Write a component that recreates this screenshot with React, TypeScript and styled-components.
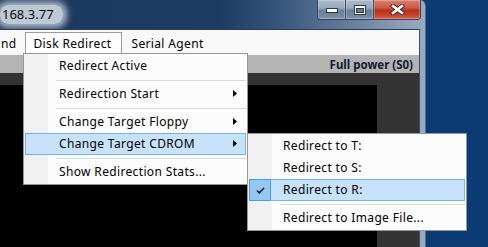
import React from 'react';
import styled, { createGlobalStyle } from 'styled-components';

const GlobalStyle = createGlobalStyle`
  html, body { margin: 0; padding: 0; background: #0c3a73; }
  body { font-family: "Noto Sans", "Open Sans", sans-serif; }
  #root { width: 488px; height: 247px; }
`;

const Desktop = styled.div`
  position: relative;
  width: 488px;
  height: 247px;
  overflow: hidden;
  background: #0c3a73;
  display: flex;
  align-items: stretch;
`;

const Window = styled.div`
  width: 426px;
  box-sizing: border-box;
  display: flex;
  flex-direction: column;
  padding-right: 5px;
  border-right: 1px solid #5b7190;
  border-top-right-radius: 6px;
  background: linear-gradient(
    to right,
    #1b395e 0%,
    #1e3c61 52%,
    #34517a 64%,
    #5f7897 80%,
    #8a9db6 94%,
    #99abc2 100%
  );
`;

const TitleBar = styled.div`
  height: 29px;
  display: flex;
  justify-content: space-between;
  align-items: flex-start;
`;

const Title = styled.span`
  margin-top: 5px;
  height: 19px;
  line-height: 19px;
  padding: 0 9px 0 2px;
  font-size: 13px;
  color: #0a0a0a;
  background: rgba(205, 213, 223, 0.92);
  border-radius: 8px;
  box-shadow: 0 0 6px 4px rgba(205, 213, 223, 0.8);
`;

const CaptionGroup = styled.div`
  display: flex;
  height: 20px;
  border: 1px solid #34455b;
  border-top: none;
  border-radius: 0 0 4px 4px;
  overflow: hidden;
  box-sizing: border-box;
  margin-right: -1px;
`;

const CaptionButton = styled.div<{ $w: number; $close?: boolean }>`
  width: ${(p) => p.$w}px;
  display: flex;
  align-items: center;
  justify-content: center;
  box-sizing: border-box;
  border-left: 1px solid #3a4b62;
  box-shadow: inset 0 0 0 1px rgba(255, 255, 255, 0.25);
  &:first-child { border-left: none; }
  background: ${(p) =>
    p.$close
      ? 'linear-gradient(to bottom, #d9806f 0%, #cc5a44 40%, #b8321b 55%, #c8432a 80%, #d8654a 100%)'
      : 'linear-gradient(to bottom, #aebbcb 0%, #97a8bd 42%, #6a7f9c 55%, #72879f 85%, #8596ad 100%)'};
`;

const Client = styled.div`
  flex: 1;
  display: flex;
  flex-direction: column;
  border-top: 1px solid #2b3e57;
  border-right: 1px solid #3e4f66;
  background: #333333;
`;

const MenuBar = styled.div`
  height: 25px;
  box-sizing: border-box;
  padding-top: 2px;
  display: flex;
  align-items: stretch;
  background: #f8f8f8;
  font-size: 12px;
  letter-spacing: 0.35px;
  color: #000;
`;

const MenuTab = styled.div<{ $active?: boolean; $pl: number; $pr: number }>`
  display: flex;
  align-items: center;
  padding: 0 ${(p) => p.$pr}px 1px ${(p) => p.$pl}px;
  border: 1px solid ${(p) => (p.$active ? '#9d9d9d' : 'transparent')};
  border-bottom: none;
  background: ${(p) => (p.$active ? '#fdfdfd' : 'transparent')};
  white-space: nowrap;
`;

const StatusBar = styled.div`
  height: 18px;
  display: flex;
  align-items: center;
  justify-content: flex-end;
  padding-right: 6px;
  background: #b4b4b4;
  font-size: 11.5px;
  font-weight: 700;
  color: #0f1c36;
`;

const Screen = styled.div`
  flex: 1;
  display: flex;
  padding-top: 12px;
  background: #333333;
`;

const Display = styled.div`
  width: 377px;
  background: #000;
`;

const Menu = styled.div<{ $x: number; $y: number; $w: number }>`
  position: absolute;
  left: ${(p) => p.$x}px;
  top: ${(p) => p.$y}px;
  width: ${(p) => p.$w}px;
  box-sizing: border-box;
  border: 1px solid #979797;
  padding: 1px;
  background: linear-gradient(to right, #f1f1f1 0, #f1f1f1 25px, #fcfcfc 25px);
  background-origin: border-box;
  font-size: 12px;
  letter-spacing: 0.35px;
  color: #000;
`;

const MenuItem = styled.div<{ $hot?: boolean }>`
  position: relative;
  height: 22px;
  box-sizing: border-box;
  display: flex;
  align-items: center;
  justify-content: space-between;
  padding: 0 8px 1px 33px;
  border: 1px solid ${(p) => (p.$hot ? '#7ab3ea' : 'transparent')};
  background: ${(p) => (p.$hot ? '#c7e2fb' : 'transparent')};
  white-space: nowrap;
`;

const CheckBox = styled.div`
  position: absolute;
  left: -1px;
  top: -1px;
  width: 22px;
  height: 22px;
  box-sizing: border-box;
  border: 1px solid #4a9de8;
  background: #93c8f5;
  display: flex;
  align-items: center;
  justify-content: center;
`;

const Separator = styled.div`
  height: 6px;
  box-sizing: border-box;
  padding-top: 3px;
  margin-left: 31px;
  &::before {
    content: '';
    display: block;
    height: 1px;
    background: #d7d7d7;
    border-bottom: 1px solid #ffffff;
  }
`;

const Arrow = () => (
  <svg width="4" height="7" viewBox="0 0 4 7">
    <polygon points="0,0 4,3.5 0,7" fill="#000" />
  </svg>
);

const Check = () => (
  <svg width="9" height="7" viewBox="0 0 9 7">
    <polyline points="1,3.5 3.3,5.8 8,1" fill="none" stroke="#1a1a1a" strokeWidth="1.6" />
  </svg>
);

const MinGlyph = () => (
  <svg width="12" height="6" viewBox="0 0 12 6">
    <rect x="0.5" y="1.5" width="11" height="4" fill="#fff" stroke="#2c394b" />
  </svg>
);

const MaxGlyph = () => (
  <svg width="12" height="10" viewBox="0 0 12 10">
    <rect x="0.5" y="0.5" width="11" height="9" fill="#fff" stroke="#2c394b" />
    <rect x="2.5" y="3.5" width="7" height="4" fill="#6a7c95" stroke="#2c394b" />
  </svg>
);

const CloseGlyph = () => (
  <svg width="15" height="11" viewBox="0 0 15 11">
    <g strokeLinecap="square">
      <line x1="3" y1="2" x2="12" y2="9" stroke="#3a2a2a" strokeWidth="4.4" />
      <line x1="12" y1="2" x2="3" y2="9" stroke="#3a2a2a" strokeWidth="4.4" />
      <line x1="3" y1="2" x2="12" y2="9" stroke="#fff" strokeWidth="2.6" />
      <line x1="12" y1="2" x2="3" y2="9" stroke="#fff" strokeWidth="2.6" />
    </g>
  </svg>
);

export default function App() {
  return (
    <>
      <GlobalStyle />
      <Desktop>
        <Window>
          <TitleBar>
            <Title>168.3.77</Title>
            <CaptionGroup>
              <CaptionButton $w={27}>
                <MinGlyph />
              </CaptionButton>
              <CaptionButton $w={28}>
                <MaxGlyph />
              </CaptionButton>
              <CaptionButton $w={47} $close>
                <CloseGlyph />
              </CaptionButton>
            </CaptionGroup>
          </TitleBar>
          <Client>
            <MenuBar>
              <MenuTab $pl={0} $pr={7}>nd</MenuTab>
              <MenuTab $active $pl={8} $pr={10}>Disk Redirect</MenuTab>
              <MenuTab $pl={8} $pr={9}>Serial Agent</MenuTab>
            </MenuBar>
            <StatusBar>Full power (S0)</StatusBar>
            <Screen>
              <Display />
            </Screen>
          </Client>
        </Window>

        <Menu $x={23} $y={53} $w={225}>
          <MenuItem>Redirect Active</MenuItem>
          <Separator />
          <MenuItem>
            Redirection Start
            <Arrow />
          </MenuItem>
          <Separator />
          <MenuItem>
            Change Target Floppy
            <Arrow />
          </MenuItem>
          <MenuItem $hot>
            Change Target CDROM
            <Arrow />
          </MenuItem>
          <Separator />
          <MenuItem>Show Redirection Stats...</MenuItem>
        </Menu>

        <Menu $x={247} $y={133} $w={220}>
          <MenuItem>Redirect to T:</MenuItem>
          <MenuItem>Redirect to S:</MenuItem>
          <MenuItem $hot>
            <CheckBox>
              <Check />
            </CheckBox>
            Redirect to R:
          </MenuItem>
          <Separator />
          <MenuItem>Redirect to Image File...</MenuItem>
        </Menu>
      </Desktop>
    </>
  );
}
